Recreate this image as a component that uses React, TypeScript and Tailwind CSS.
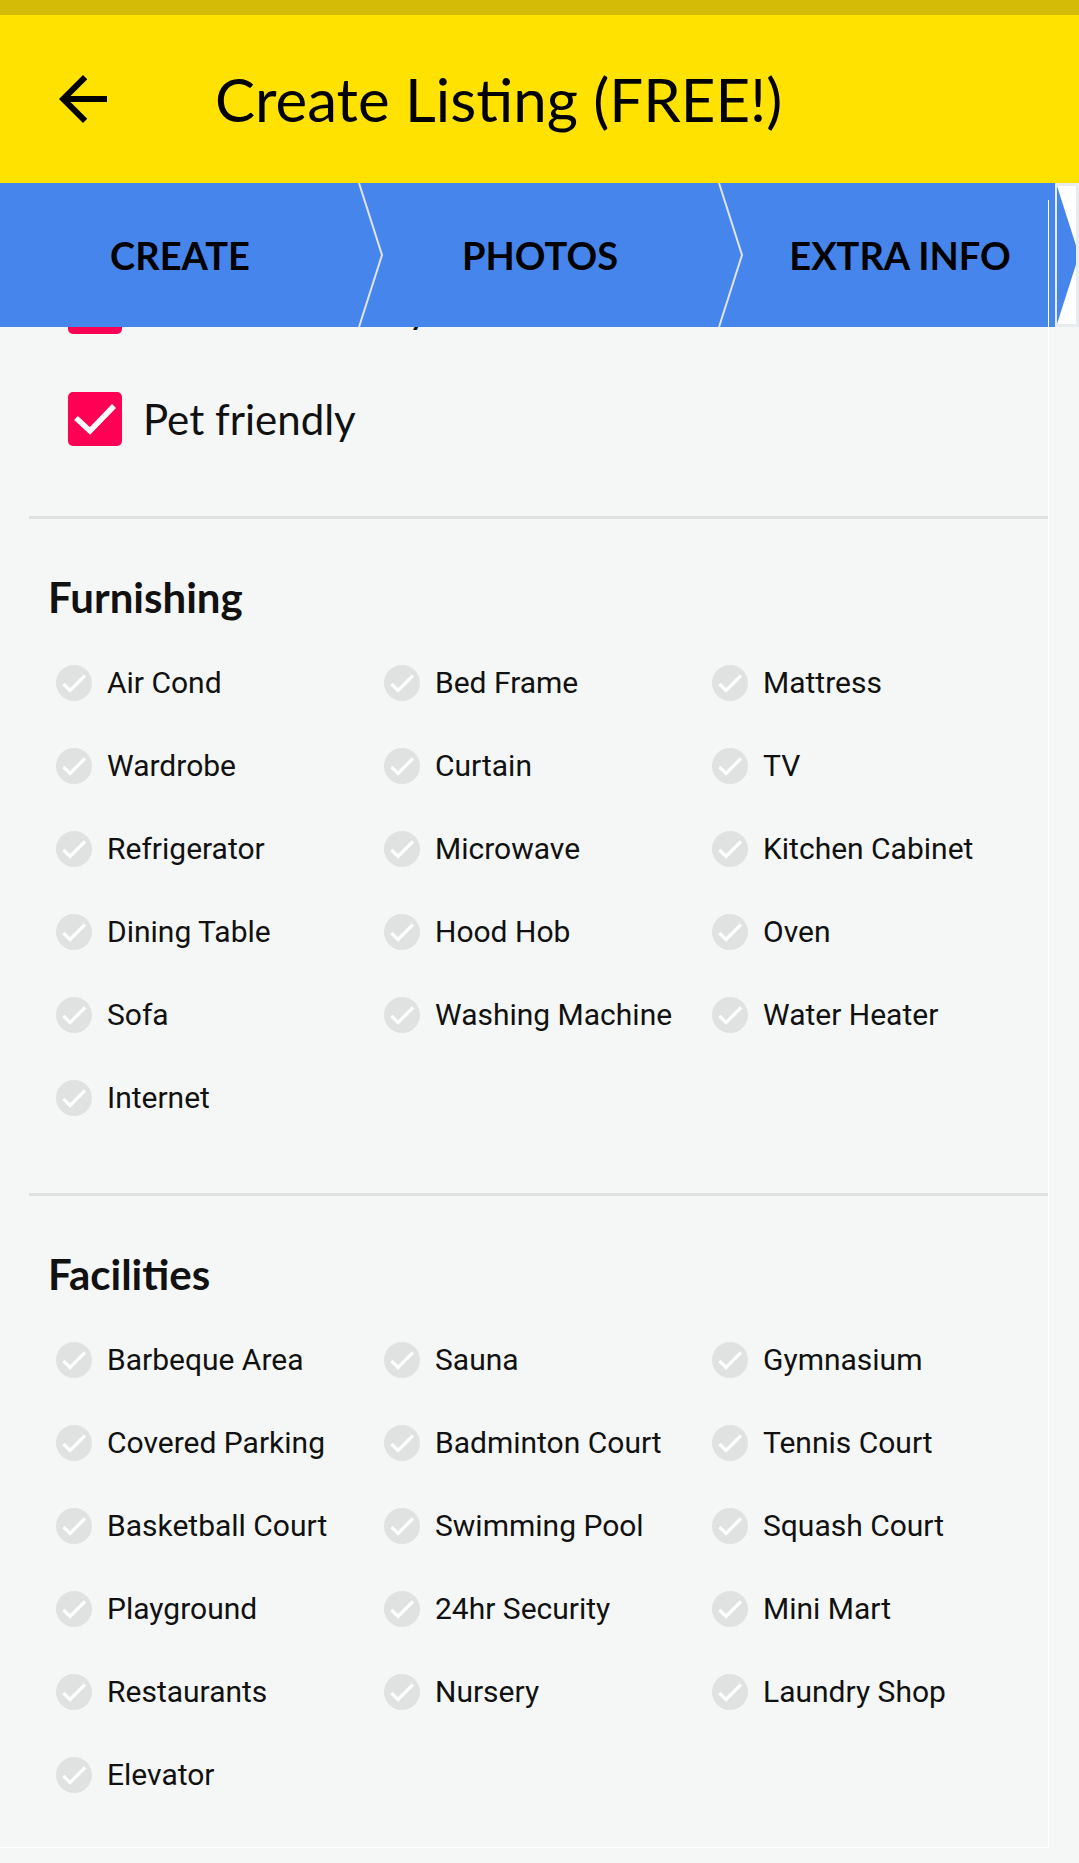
import React from "react";

const furnishing = [
  "Air Cond", "Bed Frame", "Mattress",
  "Wardrobe", "Curtain", "TV",
  "Refrigerator", "Microwave", "Kitchen Cabinet",
  "Dining Table", "Hood Hob", "Oven",
  "Sofa", "Washing Machine", "Water Heater",
  "Internet",
];

const facilities = [
  "Barbeque Area", "Sauna", "Gymnasium",
  "Covered Parking", "Badminton Court", "Tennis Court",
  "Basketball Court", "Swimming Pool", "Squash Court",
  "Playground", "24hr Security", "Mini Mart",
  "Restaurants", "Nursery", "Laundry Shop",
  "Elevator",
];

const lato = "font-['Lato','Liberation_Sans',sans-serif]";
const roboto = "font-['Roboto','Liberation_Sans',sans-serif]";

const Chevron = () => (
  <svg
    className="absolute top-0 left-[358px] h-[144px] w-[26px]"
    viewBox="0 0 26 144"
    fill="none"
  >
    <polyline points="1,0 24,72 1,144" stroke="#dfe3ea" strokeWidth="2" />
  </svg>
);

const GreyCheck = () => (
  <svg className="h-[36px] w-[36px] shrink-0" viewBox="0 0 36 36">
    <circle cx="18" cy="18" r="18" fill="#e0e1e1" />
    <polyline
      points="7.5,19 14,25.5 29,10.5"
      fill="none"
      stroke="#ffffff"
      strokeWidth="3.2"
    />
  </svg>
);

const PinkBox = () => (
  <div className="h-[54px] w-[54px] shrink-0 rounded-[5px] bg-[#ff0055]">
    <svg className="h-[54px] w-[54px]" viewBox="0 0 54 54">
      <polyline
        points="8,26 22,39 46,14"
        fill="none"
        stroke="#ffffff"
        strokeWidth="5.5"
      />
    </svg>
  </div>
);

const Section = ({ title, items }: { title: string; items: string[] }) => (
  <div className="pt-[53px]">
    <h2 className={`${lato} pl-[48px] text-[42px] font-bold leading-[50px] text-[#111]`}>
      {title}
    </h2>
    <div className="mt-[19px] grid grid-cols-[repeat(3,328px)] pl-[48px]">
      {items.map((item) => (
        <div key={item} className="flex h-[83px] items-center pl-[8px]">
          <GreyCheck />
          <span className={`${roboto} ml-[15px] whitespace-nowrap text-[30px] text-[#111]`}>
            {item}
          </span>
        </div>
      ))}
    </div>
  </div>
);

export default function App() {
  return (
    <div className="h-[1863px] w-[1079px] overflow-hidden bg-[#f5f7f6]">
      {/* status bar */}
      <div className="h-[15px] bg-[#d4bb07]" />

      {/* app bar */}
      <div className="flex h-[168px] items-center bg-[#ffe200] pl-[47px]">
        <svg className="h-[72px] w-[72px]" viewBox="0 0 24 24" fill="#000">
          <path d="M20 11H7.83l5.59-5.59L12 4l-8 8 8 8 1.41-1.41L7.83 13H20v-2z" />
        </svg>
        <h1 className={`${lato} ml-[96px] text-[60px] leading-none text-black`}>
          Create Listing (FREE!)
        </h1>
      </div>

      {/* step tabs */}
      <div className="relative flex h-[144px] overflow-hidden bg-[#4686ec]">
        {["CREATE", "PHOTOS", "EXTRA INFO"].map((t, i) => (
          <div key={t} className="relative flex h-full w-[360px] shrink-0 items-center justify-center">
            <span className={`${lato} text-[38px] font-bold text-black`}>{t}</span>
            {i < 2 && <Chevron />}
          </div>
        ))}
        <div className="absolute top-[17px] bottom-0 left-[1048px] w-px bg-white" />
        <div className="absolute top-0 bottom-0 left-[1055px] w-[24px] bg-[#e9ecef] py-[3px] pl-[2px] pr-[3px]">
          <div className="relative h-full bg-white">
            <svg className="absolute inset-0 h-full w-full" viewBox="0 0 19 138" preserveAspectRatio="none">
              <polygon points="0,0 22,69 0,138" fill="#4686ec" />
            </svg>
          </div>
        </div>
      </div>

      {/* form content */}
      <div className="h-[1521px] w-[1049px] overflow-hidden border-r border-b border-white">
        <div className="-mt-[76px] pl-[68px]">
          {["Muslim friendly", "Pet friendly"].map((label) => (
            <div key={label} className="flex h-[112px] items-center">
              <PinkBox />
              <span className={`${lato} ml-[21px] text-[42px] text-[#111]`}>{label}</span>
            </div>
          ))}
        </div>
        <div className="ml-[29px] mt-[41px] h-[3px] bg-[#e0e1e1]" />
        <Section title="Furnishing" items={furnishing} />
        <div className="ml-[29px] mt-[54px] h-[3px] bg-[#e0e1e1]" />
        <Section title="Facilities" items={facilities} />
      </div>
    </div>
  );
}
